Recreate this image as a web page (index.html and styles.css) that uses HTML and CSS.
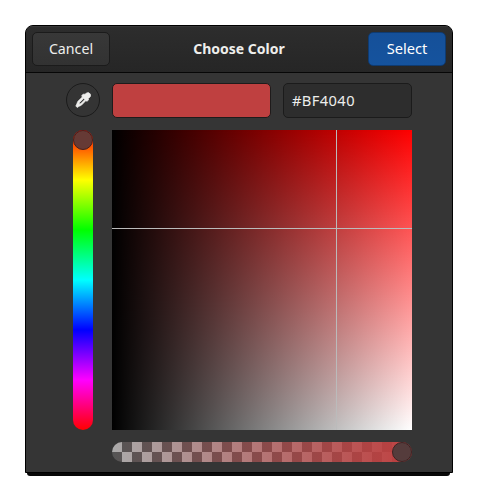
FILE: index.html
```html
<!DOCTYPE html>
<html lang="en">
<head>
<meta charset="utf-8">
<title>Choose Color</title>
<link rel="stylesheet" href="styles.css">
</head>
<body>
<main class="dialog">
  <header class="header">
    <button class="button cancel">Cancel</button>
    <h1 class="title">Choose Color</h1>
    <button class="button suggested">Select</button>
  </header>
  <section class="editor">
    <button class="picker" aria-label="Pick a color">
      <svg width="16" height="16" viewBox="0 0 16 16">
        <path fill="#eeeeec" stroke="#eeeeec" stroke-width=".7" fill-rule="evenodd" d="M10 2.200 12 .8h2l1.500 1.500v2L14 6l-.8.400.300 1.600-1.500 1.300-1.200-.6-4.500 4.600-2.300 1-1.800 1.200L.8 14l1-2 .9-2.500L7.300 5l-.6-1.200L8 2.200zM8.600 6.500 4.600 10.500 4 12.200l1.800-.6 4-4z"/>
      </svg>
    </button>
    <div class="fields">
      <div class="swatch"></div>
      <div class="entry">#BF4040</div>
    </div>
    <div class="hue"><div class="knob hue-knob"></div></div>
    <div class="plane"><i class="line-h"></i><i class="line-v"></i></div>
    <div class="alpha"><div class="knob alpha-knob"></div></div>
  </section>
</main>
<div class="base"></div>
</body>
</html>
```
FILE: styles.css
```css
* { box-sizing: border-box; }
body {
  margin: 0;
  padding: 25px 27px 0 25px;
  background: #fff;
  font: 14.67px/20px "Noto Sans", sans-serif;
  color: #eeeeec;
}
.dialog {
  height: 448px;
  border: 1px solid #000;
  border-radius: 8px 8px 0 0;
  background: #353535;
  overflow: hidden;
}
.header {
  height: 47px;
  display: flex;
  justify-content: space-between;
  align-items: flex-start;
  padding: 6px;
  border-bottom: 1px solid #070707;
  background: linear-gradient(#2d2d2d, #262626);
  box-shadow: inset 0 1px #383838;
}
.title { margin: 7px 0 0; font-size: 14px; line-height: 20px; font-weight: 700; }
.button {
  width: 78px;
  height: 34px;
  padding: 0 0 2px;
  border: 1px solid #1b1b1b;
  border-radius: 5px;
  background: linear-gradient(#383838, #323232);
  color: inherit;
  font: inherit;
}
.cancel { padding: 0; font-size: 14.2px; }
.suggested { border-color: #0f3b71; background: linear-gradient(#155099, #15539e); color: #fff; }
.editor {
  display: grid;
  grid-template-columns: 34px 300px;
  grid-template-rows: 35px 300px 20px;
  gap: 12px;
  padding: 10px 0 0 40px;
}
.picker {
  width: 34px;
  height: 34px;
  padding: 0;
  border: 1px solid #1b1b1b;
  border-radius: 50%;
  background: #343434;
  display: grid;
  place-items: center;
}
.fields { display: flex; gap: 12px; }
.swatch { width: 159px; border: 1px solid #1f1b1b; border-radius: 5px; background: #bf4040; }
.entry {
  width: 129px;
  padding: 6px 8px;
  border: 1px solid #1b1b1b;
  border-radius: 5px;
  background: #2d2d2d;
  letter-spacing: .4px;
}
.hue {
  width: 20px;
  margin-left: 7px;
  border-radius: 10px;
  background: linear-gradient(red, yellow, lime, cyan, blue, magenta, red);
}
.plane {
  position: relative;
  background: linear-gradient(to right, #000, transparent), linear-gradient(red, #fff);
}
.line-h, .line-v { position: absolute; background: #bbb; }
.line-h { left: 0; right: 0; top: 98px; height: 1px; }
.line-v { top: 0; bottom: 0; left: 224px; width: 1px; }
.alpha {
  grid-column: 2;
  display: flex;
  justify-content: flex-end;
  border-radius: 10px;
  background:
    linear-gradient(to right, rgba(191, 64, 64, 0), #bf4040),
    conic-gradient(#555 25%, #aaa 0 50%, #555 0 75%, #aaa 0) 0 0 / 20px 20px;
}
.knob { width: 20px; height: 20px; border: 1px solid; border-radius: 50%; }
.hue-knob { background: #663a35; border-color: #49201b; }
.alpha-knob { background: #553c3c; border-color: #3c2424; }
.base { height: 3px; margin: 0 3px 0 2px; background: #080808; border-radius: 0 0 5px 5px; }
```
